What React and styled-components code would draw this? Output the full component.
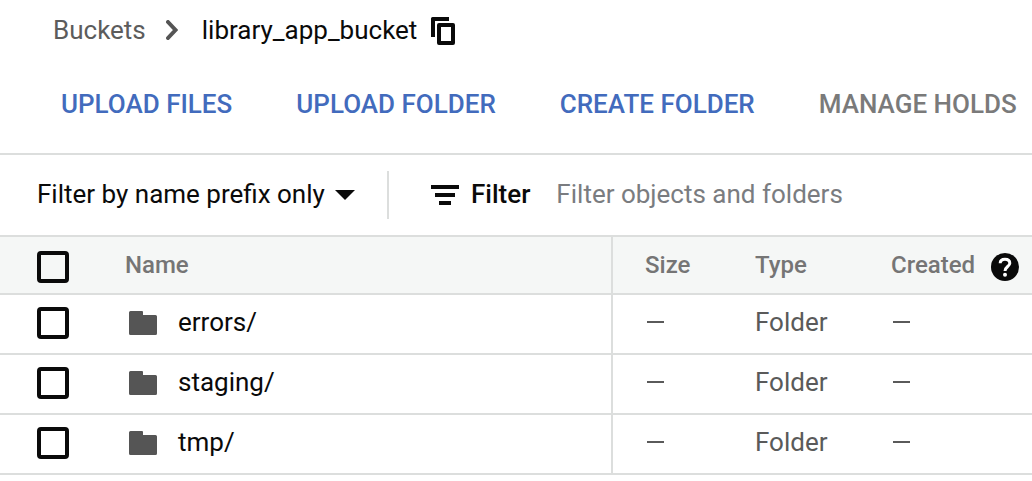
import React from "react";
import styled, { createGlobalStyle } from "styled-components";

const line = "#dcdedd";

const GlobalStyle = createGlobalStyle`
  *, *::before, *::after { box-sizing: border-box; }
  body {
    margin: 0;
    background: #fff;
    color: #0a0a0a;
    font: 400 26px/32px Roboto, "Liberation Sans", sans-serif;
  }
  svg { display: block; flex: none; }
`;

const Breadcrumbs = styled.nav`
  display: flex;
  align-items: center;
  height: 60px;
  padding: 0 53px;
`;

const ParentLink = styled.a`
  color: #5c5c5c;
  text-decoration: none;
`;

const Chevron = styled.svg`
  margin: 0 24px 0 20px;
`;

const IconButton = styled.button`
  margin: 2px 0 0 14px;
  padding: 0;
  border: 0;
  background: none;
  color: inherit;
  cursor: pointer;
`;

const Actions = styled.div`
  display: flex;
  align-items: center;
  gap: 64px;
  height: 95px;
  padding: 0 15px 6px 61px;
  border-bottom: 2px solid ${line};
`;

const ActionButton = styled.button`
  padding: 0;
  border: 0;
  background: none;
  color: #426bbd;
  font: inherit;
  font-weight: 500;
  white-space: nowrap;
  cursor: pointer;
  &:disabled { color: #7a7a7a; cursor: default; }
`;

const FilterBar = styled.div`
  display: flex;
  align-items: center;
  height: 80px;
  padding: 0 37px;
`;

const ModePicker = styled.div`
  position: relative;
  display: flex;
  align-items: center;
  height: 48px;
  padding-right: 32px;
  border-right: 2px solid ${line};
`;

const ModeSelect = styled.select`
  appearance: none;
  padding: 0 30px 2px 0;
  border: 0;
  background: none;
  color: inherit;
  font: inherit;
`;

const Caret = styled.svg`
  position: absolute;
  right: 32px;
  pointer-events: none;
`;

const FilterField = styled.label`
  display: flex;
  flex: 1;
  align-items: center;
  gap: 12px;
  min-width: 0;
  padding-left: 42px;
  font-weight: 500;
`;

const FilterLabel = styled.span`
  padding-bottom: 2px;
`;

const FilterInput = styled.input`
  flex: 1;
  min-width: 0;
  margin-left: 14px;
  padding: 0 0 2px;
  border: 0;
  outline: 0;
  background: none;
  font: inherit;
  font-weight: 400;
  &::placeholder { color: #7a7c80; opacity: 1; }
`;

const ObjectTable = styled.table`
  width: 100%;
  table-layout: fixed;
  border-collapse: separate;
  border-spacing: 0;
`;

const Column = styled.col`
  width: ${(p) => p.$width};
`;

const HeadCell = styled.th`
  height: 60px;
  padding: 0 0 0 ${(p) => (p.$check ? "37px" : "32px")};
  border: solid ${line};
  border-width: 2px 0 2px ${(p) => (p.$divided ? "2px" : "0")};
  background: #f5f7f6;
  color: #757575;
  font-size: 24px;
  font-weight: 500;
  text-align: left;
  white-space: nowrap;
`;

const Cell = styled.td`
  height: 60px;
  padding: ${(p) => (p.$check ? "0 0 6px 37px" : "0 0 4px 32px")};
  border: solid ${line};
  border-width: 0 0 2px ${(p) => (p.$divided ? "2px" : "0")};
  color: #5a5a5a;
`;

const Checkbox = styled.input`
  appearance: none;
  display: block;
  width: 32px;
  height: 32px;
  margin: 4px 0 0;
  border: 4px solid #0a0a0a;
  border-radius: 4px;
  &:checked { background: #0a0a0a; }
`;

const ObjectName = styled.span`
  display: flex;
  align-items: center;
  gap: 21px;
  padding-left: 4px;
  color: #0a0a0a;
  svg { margin-top: 2px; }
`;

const HeadLabel = styled.span`
  display: flex;
  align-items: center;
  gap: 16px;
  svg { margin-top: 4px; }
`;

const Dash = styled.span`
  display: block;
  width: 17px;
  height: 2px;
  margin-left: 2px;
  background: #5a5a5a;
`;

const CopyIcon = () => (
  <svg width="24" height="28" viewBox="0 0 24 28" fill="currentColor">
    <path d="M1.500 0H18V4H4V20H0V1.500A1.500 1.500 0 0 1 1.500 0Z" />
    <path fillRule="evenodd" d="M8 6H22A2 2 0 0 1 24 8V26A2 2 0 0 1 22 28H8A2 2 0 0 1 6 26V8A2 2 0 0 1 8 6ZM10 10V24H20V10Z" />
  </svg>
);

const FolderIcon = () => (
  <svg width="28" height="24" viewBox="0 0 28 24" fill="#555">
    <path d="M1.500 0H13a1 1 0 0 1 1 1V4H26.500A1.500 1.500 0 0 1 28 5.500V22.500A1.500 1.500 0 0 1 26.500 24H1.500A1.500 1.500 0 0 1 0 22.500V1.500A1.500 1.500 0 0 1 1.500 0Z" />
  </svg>
);

const HelpIcon = () => (
  <svg width="28" height="28" viewBox="0 0 28 28" fill="none">
    <circle cx="14" cy="14" r="14" fill="#0a0a0a" />
    <path d="M9.200 10.200C9.200 7.600 11.200 6.200 14 6.200C16.800 6.200 18.800 7.700 18.800 10.200C18.800 13.400 14 13.800 14 18" stroke="#fff" strokeWidth="3" />
    <circle cx="14" cy="21.800" r="2" fill="#fff" />
  </svg>
);

const folders = ["errors/", "staging/", "tmp/"];

export default function App() {
  return (
    <>
      <GlobalStyle />
      <Breadcrumbs aria-label="Breadcrumb">
        <ParentLink href="#buckets">Buckets</ParentLink>
        <Chevron width="12" height="20" viewBox="0 0 12 20" fill="none" stroke="#555" strokeWidth="4" strokeLinecap="round">
          <path d="M2 2L9.500 10L2 18" />
        </Chevron>
        <span>library_app_bucket</span>
        <IconButton aria-label="Copy bucket name">
          <CopyIcon />
        </IconButton>
      </Breadcrumbs>
      <Actions>
        <ActionButton>UPLOAD FILES</ActionButton>
        <ActionButton>UPLOAD FOLDER</ActionButton>
        <ActionButton>CREATE FOLDER</ActionButton>
        <ActionButton disabled>MANAGE HOLDS</ActionButton>
      </Actions>
      <FilterBar>
        <ModePicker>
          <ModeSelect aria-label="Filter mode">
            <option>Filter by name prefix only</option>
          </ModeSelect>
          <Caret width="20" height="10" viewBox="0 0 20 10" fill="#0a0a0a">
            <path d="M0 0H20L10 10Z" />
          </Caret>
        </ModePicker>
        <FilterField>
          <svg width="28" height="20" viewBox="0 0 28 20" fill="#0a0a0a">
            <path d="M0 0H28V4H0ZM4 8H24V12H4ZM8 16H20V20H8Z" />
          </svg>
          <FilterLabel>Filter</FilterLabel>
          <FilterInput placeholder="Filter objects and folders" />
        </FilterField>
      </FilterBar>
      <ObjectTable>
        <colgroup>
          <Column $width="93px" />
          <Column $width="auto" />
          <Column $width="112px" />
          <Column $width="136px" />
          <Column $width="173px" />
        </colgroup>
        <thead>
          <tr>
            <HeadCell $check>
              <Checkbox type="checkbox" aria-label="Select all" />
            </HeadCell>
            <HeadCell>Name</HeadCell>
            <HeadCell $divided>Size</HeadCell>
            <HeadCell>Type</HeadCell>
            <HeadCell>
              <HeadLabel>
                Created
                <HelpIcon />
              </HeadLabel>
            </HeadCell>
          </tr>
        </thead>
        <tbody>
          {folders.map((name) => (
            <tr key={name}>
              <Cell $check>
                <Checkbox type="checkbox" aria-label={`Select ${name}`} />
              </Cell>
              <Cell>
                <ObjectName>
                  <FolderIcon />
                  {name}
                </ObjectName>
              </Cell>
              <Cell $divided>
                <Dash role="img" aria-label="No size" />
              </Cell>
              <Cell>Folder</Cell>
              <Cell>
                <Dash role="img" aria-label="No creation date" />
              </Cell>
            </tr>
          ))}
        </tbody>
      </ObjectTable>
    </>
  );
}
